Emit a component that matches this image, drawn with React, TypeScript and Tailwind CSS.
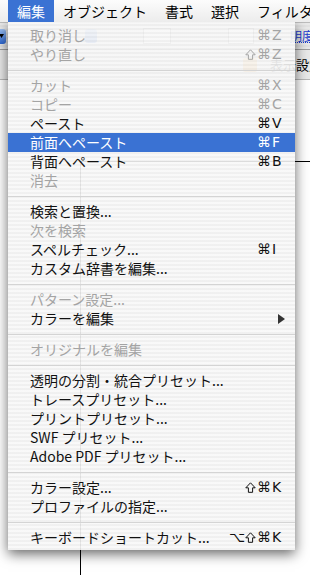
import React from 'react';

type Row = {
  label: string;
  mods?: string[];
  k?: string;
  dis?: boolean;
  hl?: boolean;
  sub?: boolean;
};
type Item = Row | 'sep';

const items: Item[] = [
  { label: '取り消し', mods: ['⌘'], k: 'Z', dis: true },
  { label: 'やり直し', mods: ['⇧', '⌘'], k: 'Z', dis: true },
  'sep',
  { label: 'カット', mods: ['⌘'], k: 'X', dis: true },
  { label: 'コピー', mods: ['⌘'], k: 'C', dis: true },
  { label: 'ペースト', mods: ['⌘'], k: 'V' },
  { label: '前面へペースト', mods: ['⌘'], k: 'F', hl: true },
  { label: '背面へペースト', mods: ['⌘'], k: 'B' },
  { label: '消去', dis: true },
  'sep',
  { label: '検索と置換...' },
  { label: '次を検索', dis: true },
  { label: 'スペルチェック...', mods: ['⌘'], k: 'I' },
  { label: 'カスタム辞書を編集...' },
  'sep',
  { label: 'パターン設定...', dis: true },
  { label: 'カラーを編集', sub: true },
  'sep',
  { label: 'オリジナルを編集', dis: true },
  'sep',
  { label: '透明の分割・統合プリセット...' },
  { label: 'トレースプリセット...' },
  { label: 'プリントプリセット...' },
  { label: 'SWF プリセット...' },
  { label: 'Adobe PDF プリセット...' },
  'sep',
  { label: 'カラー設定...', mods: ['⇧', '⌘'], k: 'K' },
  { label: 'プロファイルの指定...' },
  'sep',
  { label: 'キーボードショートカット...', mods: ['⌥', '⇧', '⌘'], k: 'K' },
];

function Mod({ m }: { m: string }) {
  if (m === '⇧') {
    return (
      <span className="flex w-[14px] items-center justify-center">
        <svg width="11" height="11" viewBox="0 0 11 11">
          <path
            d="M5.5 0.8 L10.2 5.8 L7.6 5.8 L7.6 10.3 L3.4 10.3 L3.4 5.8 L0.8 5.8 Z"
            fill="none"
            stroke="currentColor"
            strokeWidth="1"
            strokeLinejoin="miter"
          />
        </svg>
      </span>
    );
  }
  return <span className="w-[14px] text-center">{m}</span>;
}

function MenuRow({ r }: { r: Row }) {
  const color = r.hl ? 'bg-[#3a72d3] text-white' : r.dis ? 'text-[#a4a4a4]' : 'text-[#111111]';
  return (
    <div className={`flex h-[19px] items-center pl-[22px] pr-[10px] text-[14px] leading-[19px] ${color}`}>
      <span className="flex-1 whitespace-nowrap">{r.label}</span>
      {r.mods && (
        <span className="flex items-center font-['DejaVu_Sans',sans-serif] text-[14px] leading-[19px]">
          {r.mods.map((m, i) => (
            <Mod key={i} m={m} />
          ))}
        </span>
      )}
      <span className="flex w-[14px] justify-start pl-[1px] font-['DejaVu_Sans',sans-serif] text-[14px] leading-[19px]">
        {r.k}
        {r.sub && (
          <svg width="7" height="10" viewBox="0 0 7 10" className="ml-[6px] mt-[1px]">
            <path d="M0 0 L7 5 L0 10 Z" fill="#333333" />
          </svg>
        )}
      </span>
    </div>
  );
}

export default function App() {
  const bar = ['編集', 'オブジェクト', '書式', '選択', 'フィルタ'];
  return (
    <div className="relative h-[575px] w-[310px] overflow-hidden bg-white font-['Noto_Sans_CJK_JP',sans-serif] text-black">
      {/* menu bar */}
      <div className="relative z-20 flex h-[22px] bg-[linear-gradient(#fcfcfc,#ececec)] pl-[8px] text-[14px] leading-[22px]">
        {bar.map((t, i) => (
          <div
            key={t}
            className={
              i === 0
                ? 'shrink-0 whitespace-nowrap bg-[#3a72d3] px-[9px] text-white'
                : 'shrink-0 whitespace-nowrap px-[9px] text-black'
            }
          >
            {t}
          </div>
        ))}
      </div>

      {/* control palette */}
      <div className="flex h-[28px] items-center border-t border-b border-t-[#bdbdbd] border-b-[#9f9f9f] bg-[image:repeating-linear-gradient(180deg,#e9e9e9_0px,#e9e9e9_2px,#e2e2e2_2px,#e2e2e2_4px)]">
        <div className="-ml-[10px] flex h-[15px] w-[16px] shrink-0 items-center justify-end rounded-[3px] bg-[linear-gradient(#9cc0f4,#2c67d2)] pr-[2px]">
          <svg width="5" height="4" viewBox="0 0 5 4">
            <path d="M0 0 L5 0 L2.5 4 Z" fill="#000" />
          </svg>
        </div>
        <div className="ml-[27px] h-[14px] w-[20px] shrink-0 border border-[#8a8a8a] bg-white" />
        <div className="ml-[32px] h-[14px] w-[12px] shrink-0 rounded-[3px] bg-[linear-gradient(#9cc0f4,#2c67d2)]" />
        <div className="ml-[46px] h-[16px] w-[28px] shrink-0 border border-[#8a8a8a] bg-white" />
        <div className="ml-[57px] h-[16px] w-[26px] shrink-0 border border-[#8a8a8a] bg-white" />
        <span className="ml-auto mr-[-4px] shrink-0 whitespace-nowrap border-b border-dotted border-[#1a3ad0] text-[12px] leading-[13px] text-[#1a3ad0]">
          明度
        </span>
      </div>

      {/* second row */}
      <div className="flex h-[30px] items-center justify-end border-b border-[#b8b8b8] bg-[#e9e9e9]">
        <div className="mr-[13px] h-[14px] w-[14px] shrink-0 rounded-[2px] bg-[linear-gradient(#f8c36a,#e08a1e)]" />
        <span className="mr-[-12px] shrink-0 whitespace-nowrap text-[13px] text-black">表示設定</span>
      </div>

      {/* artwork on canvas */}
      <div className="absolute left-[80px] top-[161px] h-[500px] w-[300px] border-l border-t border-black" />

      {/* dropdown menu */}
      <div className="absolute left-[8px] top-[22px] z-10 w-[287px] bg-[image:repeating-linear-gradient(180deg,rgba(248,248,248,0.92)_0px,rgba(248,248,248,0.92)_2px,rgba(239,239,239,0.92)_2px,rgba(239,239,239,0.92)_4px)] pt-[4px] pb-[3px] shadow-[0_4px_12px_rgba(0,0,0,0.6)]">
        {items.map((it, i) =>
          it === 'sep' ? (
            <div key={i} className="flex h-[12px] items-center">
              <div className="h-px w-full bg-[#d4d4d4]" />
            </div>
          ) : (
            <MenuRow key={i} r={it} />
          )
        )}
      </div>
    </div>
  );
}
